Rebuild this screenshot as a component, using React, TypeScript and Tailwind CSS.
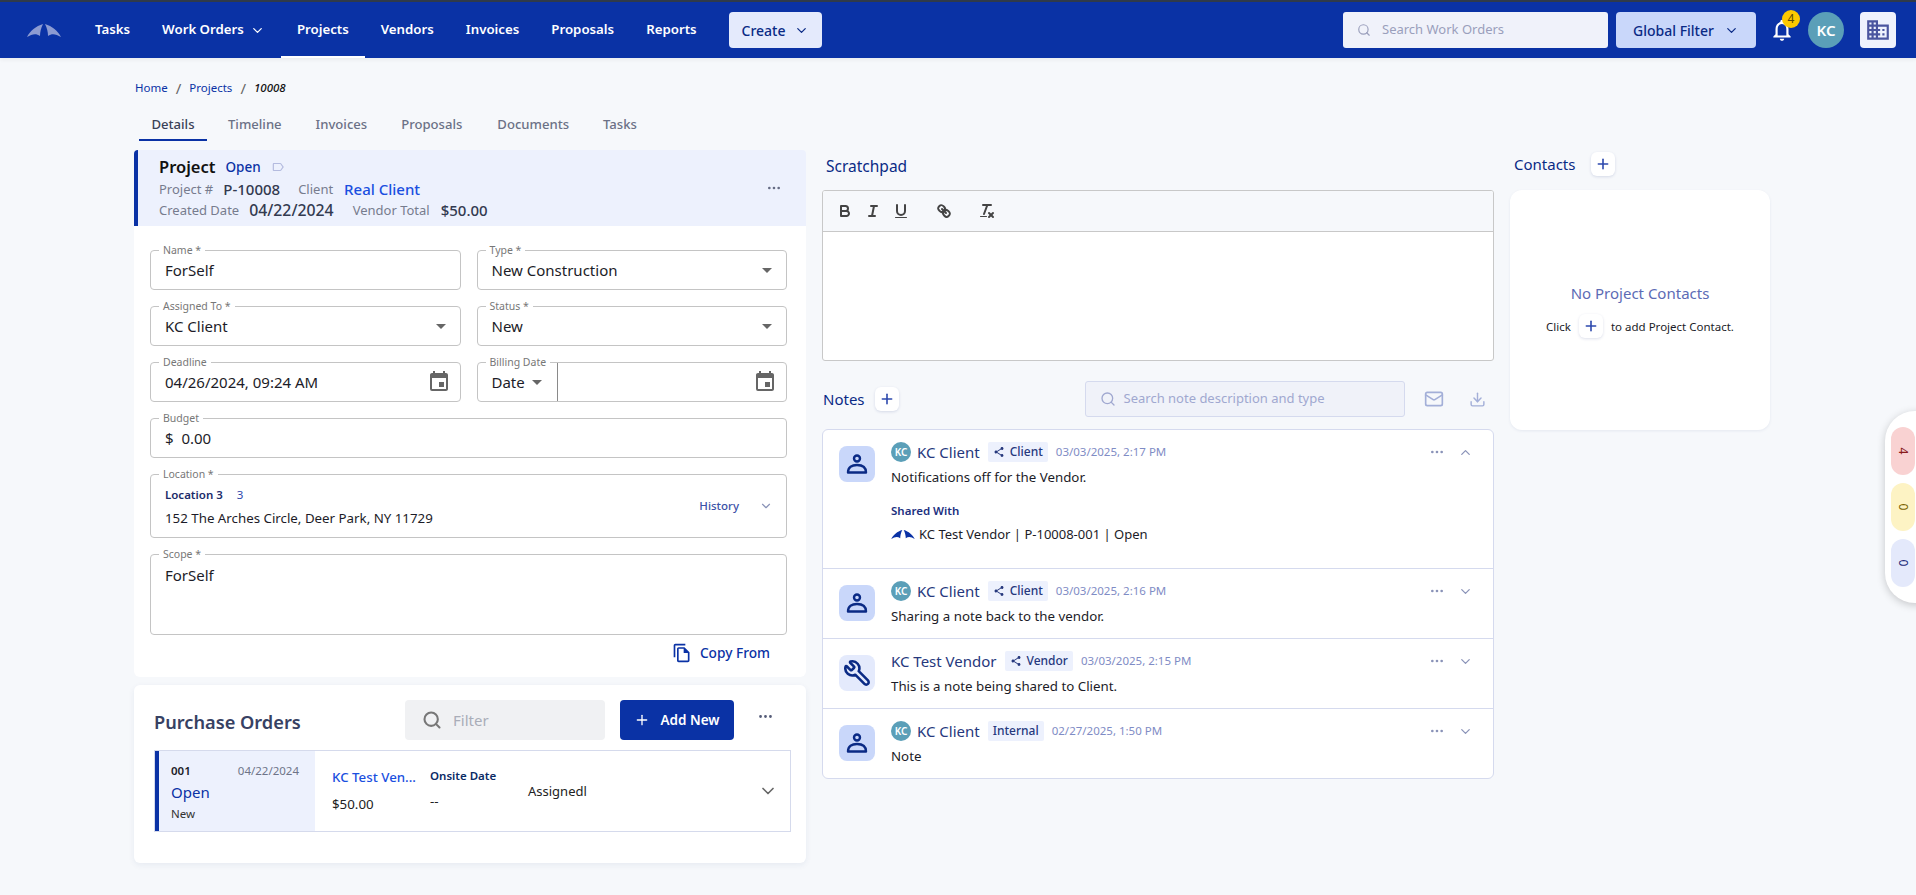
import React from "react";
import { ChevronDown, ChevronUp, Ellipsis, Plus, Search, Wrench, Download, Mail } from "lucide-react";
import { MdOutlineNotifications, MdDomain, MdEvent, MdArrowDropDown, MdShare, MdOutlineFileCopy, MdOutlineLabel } from "react-icons/md";

const font = "font-['Noto_Sans',sans-serif]";

function Logo({ className, fill }: { className?: string; fill: string }) {
  return (
    <svg viewBox="0 0 34 13" className={className} fill={fill}>
      <path d="M0 13 C3 7 9 2 16 0 C14 4 13 8 13 12 C9 9 5 10 0 13 Z" />
      <path d="M18 0 C25 2 31 7 34 13 C29 10 25 9 21 12 C21 8 20 4 18 0 Z" />
    </svg>
  );
}

function NavItem({ label, active, chevron }: { label: string; active?: boolean; chevron?: boolean }) {
  return (
    <div className={`h-full flex items-center px-4 pt-[2px] text-[13.25px] font-semibold text-white gap-[6px] border-b-2 ${active ? "border-white" : "border-transparent"}`}>
      {label}
      {chevron && <ChevronDown size={15} />}
    </div>
  );
}

function Field({ label, className, children }: { label: string; className?: string; children: React.ReactNode }) {
  return (
    <div className={`relative border border-[#c4c4c4] rounded-[4px] flex items-center px-[14px] text-[15px] text-[#1c1c28] ${className ?? "h-[40px]"}`}>
      <span className="absolute -top-[8px] left-[8px] bg-white px-[4px] text-[10.5px] leading-[14px] text-[#777]">{label}</span>
      {children}
    </div>
  );
}

function Person() {
  return (
    <svg viewBox="0 0 24 24" className="w-[24px] h-[24px]" fill="none" stroke="#0a2a85" strokeWidth="2.4" strokeLinejoin="round">
      <circle cx="12" cy="6.5" r="3" />
      <path d="M3 20.5 C3 15 7 13 12 13 C17 13 21 15 21 20.5 Z" />
    </svg>
  );
}

function QuillIcon({ children }: { children: React.ReactNode }) {
  return (
    <svg viewBox="0 0 18 18" className="w-[18px] h-[18px]" fill="none" stroke="#444" strokeWidth="2" strokeLinecap="round" strokeLinejoin="round">
      {children}
    </svg>
  );
}

function Note({ name, tag, share, date, vendor, text, open, last }: { name: string; tag: string; share?: boolean; date: string; vendor?: boolean; text: string; open?: boolean; last?: boolean }) {
  return (
    <div className={`flex pl-[16px] pr-[20px] ${open ? "h-[139px] pt-[12px]" : last ? "h-[69px] pt-[12px]" : "h-[70px] pt-[12px]"} ${last ? "" : "border-b border-[#d5daee]"}`}>
      <div className={`w-[36px] h-[36px] mt-[4px] rounded-[8px] flex items-center justify-center shrink-0 ${vendor ? "bg-[#e4eafc]" : "bg-[#c9d7fa]"}`}>
        {vendor ? <Wrench size={28} color="#0a2a85" strokeWidth={2.2} style={{ transform: "scaleX(-1)" }} /> : <Person />}
      </div>
      <div className="ml-[16px] flex-1 min-w-0">
        <div className="flex items-center h-[20px]">
          {!vendor && <div className="w-[20px] h-[20px] rounded-full bg-[#5b9fb8] text-white text-[10px] font-semibold flex items-center justify-center mr-[6px]">KC</div>}
          <span className="text-[15px] text-[#26387d]">{name}</span>
          <span className="ml-[8px] h-[20px] px-[5px] bg-[#edf1fd] rounded-[2px] flex items-center gap-[5px] text-[12px] font-medium text-[#26387d]">
            {share && <MdShare size={12} />}
            {tag}
          </span>
          <span className="ml-[8px] text-[11.5px] text-[#7f8cc5]">{date}</span>
          <Ellipsis size={16} color="#8a93b8" className="ml-auto" />
          <span className="ml-[13px]">{open ? <ChevronUp size={15} color="#8a93b8" /> : <ChevronDown size={15} color="#8a93b8" />}</span>
        </div>
        <div className="mt-[6px] text-[13.3px] leading-[18px] text-[#1c1c28]">{text}</div>
        {open && (
          <>
            <div className="mt-[17px] text-[11.5px] font-semibold leading-[16px] text-[#1c3080]">Shared With</div>
            <div className="mt-[6px] flex items-center gap-[4px] text-[13px] leading-[18px] text-[#1c1c28]">
              <Logo className="w-[24px] h-[9px]" fill="#0a32a5" />
              KC Test Vendor | P-10008-001 | Open
            </div>
          </>
        )}
      </div>
    </div>
  );
}

function PlusBtn() {
  return (
    <div className="w-[24px] h-[24px] bg-white rounded-[6px] shadow-[0_1px_3px_rgba(30,50,120,0.15)] flex items-center justify-center">
      <Plus size={16} color="#2c48ad" strokeWidth={2.4} />
    </div>
  );
}

function Pill({ bg, color, v }: { bg: string; color: string; v: string }) {
  return (
    <div className={`w-[24px] h-[48px] rounded-full ${bg} ${color} flex items-center justify-center text-[12px]`}>
      <span className="rotate-90">{v}</span>
    </div>
  );
}

export default function App() {
  return (
    <div className={`${font} relative w-[1916px] h-[895px] overflow-hidden bg-[#f6f8fb]`}>
      <header className="h-[58px] bg-[#0a32a5] border-t-2 border-[#2f3a4a] flex items-stretch pl-[27px] pr-[20px] shadow-[0_2px_4px_rgba(0,0,0,0.05)]">
        <div className="flex items-center mr-[18px]"><Logo className="w-[34px] h-[13px]" fill="#8c9bd2" /></div>
        <nav className="flex items-stretch">
          <NavItem label="Tasks" />
          <NavItem label="Work Orders" chevron />
          <NavItem label="Projects" active />
          <NavItem label="Vendors" />
          <NavItem label="Invoices" />
          <NavItem label="Proposals" />
          <NavItem label="Reports" />
        </nav>
        <div className="flex items-center ml-[16px]">
          <div className="w-[93px] h-[36px] bg-[#e4eafc] rounded-[4px] flex items-center justify-center gap-[8px] text-[14px] font-medium text-[#0a2a85]">
            Create <ChevronDown size={15} />
          </div>
        </div>
        <div className="ml-auto flex items-center">
          <div className="w-[265px] h-[36px] bg-[#f0f2fa] rounded-[3px] flex items-center pl-[14px] gap-[11px] text-[13px] text-[#9a9fbc]">
            <Search size={14} color="#9a9fbc" /> Search Work Orders
          </div>
          <div className="ml-[8px] w-[140px] h-[36px] bg-[#c9d7fa] rounded-[4px] flex items-center justify-center gap-[10px] text-[14px] font-medium text-[#0a2a85]">
            Global Filter <ChevronDown size={15} />
          </div>
          <div className="relative ml-[13px] w-[26px] h-[26px] flex items-center justify-center">
            <MdOutlineNotifications size={26} color="#fff" />
            <span className="absolute -top-[7px] left-[13px] w-[18px] h-[18px] rounded-full bg-[#fbc900] text-[#5a4a00] text-[12px] flex items-center justify-center">4</span>
          </div>
          <div className="ml-[13px] w-[36px] h-[36px] rounded-full bg-[#5b9fb8] text-white text-[15px] font-semibold flex items-center justify-center">KC</div>
          <div className="ml-[16px] w-[36px] h-[36px] rounded-[4px] bg-[#eef2fd] flex items-center justify-center">
            <MdDomain size={26} color="#4a559f" />
          </div>
        </div>
      </header>

      <div className="pl-[135px] pt-[22px] flex items-center gap-[8px] h-[38px] text-[11.5px] leading-[16px] text-[#0a32a5]">
        <span>Home</span><span className="text-[#666] text-[15px]">/</span><span>Projects</span><span className="text-[#666] text-[15px]">/</span><span className="italic font-medium text-[#111]">10008</span>
      </div>

      <div className="ml-[139px] mt-[12px] h-[42px] flex items-start text-[13.1px] font-medium text-[#6b7186]">
        <div className="w-[68px] h-[33px] pt-[7px] text-center text-[#3a4157] border-b-2 border-[#0a32a5]">Details</div>
        <div className="ml-[21px] pt-[7px]">Timeline</div>
        <div className="ml-[34px] pt-[7px]">Invoices</div>
        <div className="ml-[34px] pt-[7px]">Proposals</div>
        <div className="ml-[35px] pt-[7px]">Documents</div>
        <div className="ml-[34px] pt-[7px]">Tasks</div>
      </div>

      <div className="flex items-start pl-[134px]">
        <div className="w-[672px] shrink-0">
          <div className="h-[76px] bg-[#edf1fd] border-l-4 border-[#0a32a5] rounded-tl-[4px] rounded-tr-[4px] pl-[21px] pr-[24px] pt-[5px] relative">
            <div className="flex items-center h-[24px]">
              <span className="text-[16.5px] font-semibold text-[#111]">Project</span>
              <span className="ml-[10px] text-[13.5px] font-medium text-[#0a32a5]">Open</span>
              <MdOutlineLabel size={14} color="#b4bbdf" className="ml-[10px]" />
            </div>
            <div className="flex items-center h-[21px] text-[13px] text-[#777c8e]">
              Project #<span className="ml-[10px] text-[15px] font-medium text-[#333a50]">P-10008</span>
              <span className="ml-[18px]">Client</span><span className="ml-[11px] text-[15px] font-medium text-[#1a4fe0]">Real Client</span>
            </div>
            <div className="flex items-center h-[21px] text-[13px] text-[#777c8e]">
              Created Date<span className="ml-[10px] text-[15.8px] font-medium text-[#333a50]">04/22/2024</span>
              <span className="ml-[19px]">Vendor Total</span><span className="ml-[11px] text-[15px] font-medium text-[#333a50]">$50.00</span>
            </div>
            <Ellipsis size={16} color="#666c84" className="absolute right-[24px] top-[30px]" />
          </div>

          <div className="bg-white h-[451px] rounded-b-[6px] pl-[16px] pr-[19px] pt-[24px] flex flex-col gap-[16px]">
            <div className="grid grid-cols-2 gap-[16px]">
              <Field label="Name *">ForSelf</Field>
              <Field label="Type *">New Construction<MdArrowDropDown size={24} color="#666" className="ml-auto -mr-[7px]" /></Field>
              <Field label="Assigned To *">KC Client<MdArrowDropDown size={24} color="#666" className="ml-auto -mr-[7px]" /></Field>
              <Field label="Status *">New<MdArrowDropDown size={24} color="#666" className="ml-auto -mr-[7px]" /></Field>
              <Field label="Deadline">04/26/2024, 09:24 AM<MdEvent size={24} color="#666" className="ml-auto -mr-[5px]" /></Field>
              <Field label="Billing Date">
                <div className="w-[66px] h-[38px] shrink-0 flex items-center border-r border-[#8a8a8a]">
                  Date<MdArrowDropDown size={24} color="#666" />
                </div>
                <MdEvent size={24} color="#666" className="ml-auto -mr-[5px]" />
              </Field>
            </div>
            <Field label="Budget">$&nbsp;&nbsp;0.00</Field>
            <Field label="Location *" className="h-[64px]">
              <div className="text-[13.3px]">
                <div className="font-semibold text-[11.5px] text-[#1c2c6a] leading-[20px]">Location 3 <span className="ml-[11px] font-normal text-[#2c48ad]">3</span></div>
                <div className="mt-[3px] leading-[20px]">152 The Arches Circle, Deer Park, NY 11729</div>
              </div>
              <span className="ml-auto text-[11.5px] font-medium text-[#3c52a8]">History</span>
              <ChevronDown size={14} color="#8a93b8" className="ml-[20px] -mr-[1px]" />
            </Field>
            <Field label="Scope *" className="h-[81px] items-start pt-[9px]">ForSelf</Field>
            <div className="flex items-center justify-end gap-[8px] -mt-[8px] pr-[17px] text-[13.7px] font-medium text-[#0a32a5]">
              <MdOutlineFileCopy size={20} /> Copy From
            </div>
          </div>

          <div className="mt-[8px] h-[178px] bg-white rounded-[6px] shadow-[0_2px_6px_rgba(30,50,120,0.07)] pl-[20px] pr-[15px] pt-[15px]">
            <div className="flex items-start h-[40px]">
              <div className="text-[18.2px] leading-[28px] mt-[8px] font-semibold text-[#374163] w-[251px]">Purchase Orders</div>
              <div className="w-[200px] h-[40px] rounded-[4px] bg-[#f0f1f3] flex items-center pl-[17px] gap-[11px] text-[15px] text-[#a9adb8]">
                <Search size={20} color="#777" strokeWidth={2.5} /> Filter
              </div>
              <div className="ml-[15px] w-[114px] h-[40px] rounded-[4px] bg-[#0a32a5] text-white text-[13.5px] font-semibold flex items-center justify-center gap-[10px]">
                <Plus size={16} /> Add New
              </div>
              <Ellipsis size={17} color="#555c78" className="ml-[23px] mt-[8px]" />
            </div>
            <div className="mt-[10px] h-[82px] border border-[#d5daec] flex items-stretch">
              <div className="w-[160px] bg-[#edf1fd] border-l-4 border-[#0a32a5] pl-[12px] pr-[16px] pt-[11px]">
                <div className="flex justify-between items-center h-[18px] text-[11.5px]">
                  <span className="font-semibold text-[#1c1c28]">001</span><span className="text-[#6e7488]">04/22/2024</span>
                </div>
                <div className="text-[15px] leading-[22px] mt-[1px] text-[#0a32a5]">Open</div>
                <div className="text-[11.5px] leading-[16px] mt-[3px] text-[#333]">New</div>
              </div>
              <div className="w-[98px] ml-[17px] pt-[17px]">
                <div className="text-[13.3px] font-medium text-[#1a4fe0] truncate">KC Test Ven...</div>
                <div className="text-[13.3px] mt-[7px] text-[#222]">$50.00</div>
              </div>
              <div className="w-[98px] pt-[16px]">
                <div className="text-[11.5px] font-semibold text-[#0a2a65]">Onsite Date</div>
                <div className="text-[13.3px] mt-[8px] text-[#222]">--</div>
              </div>
              <div className="self-center text-[13px] text-[#222] mt-[1px]">Assignedl</div>
              <ChevronDown size={20} color="#666" className="ml-auto mr-[12px] self-center" />
            </div>
          </div>
        </div>

        <div className="w-[672px] ml-[16px] shrink-0">
          <div className="h-[40px] pl-[4px] pb-[6px] flex items-center text-[15.5px] text-[#0a2a85]">Scratchpad</div>
          <div className="border border-[#c8c8c8] rounded-[3px] h-[171px] bg-white overflow-hidden">
            <div className="h-[41px] bg-[#f6f8fb] border-b border-[#c8c8c8] flex items-center pl-[13px]">
              <QuillIcon><path d="M5,4H9.5A2.5,2.5,0,0,1,12,6.5v0A2.5,2.5,0,0,1,9.5,9H5V4Z" /><path d="M5,9h5.5A2.5,2.5,0,0,1,13,11.5v0A2.5,2.5,0,0,1,10.5,14H5V9Z" /></QuillIcon>
              <span className="ml-[10px]" />
              <QuillIcon><line x1="7" x2="13" y1="4" y2="4" /><line x1="5" x2="11" y1="14" y2="14" /><line x1="8" x2="10" y1="14" y2="4" /></QuillIcon>
              <span className="ml-[10px]" />
              <QuillIcon><path d="M5,3V9a4,4,0,0,0,4,4H9a4,4,0,0,0,4-4V3" /><line x1="3.5" x2="14.5" y1="15.5" y2="15.5" strokeWidth="1" /></QuillIcon>
              <span className="ml-[25px]" />
              <QuillIcon><line x1="7" x2="11" y1="7" y2="11" /><path d="M8.9,4.577a3.476,3.476,0,0,1,.36,4.679A3.476,3.476,0,0,1,4.577,8.9C3.185,7.5,2.035,6.4,4.217,4.217S7.5,3.185,8.9,4.577Z" /><path d="M13.423,9.1a3.476,3.476,0,0,0-4.679-.36,3.476,3.476,0,0,0,.36,4.679c1.392,1.392,2.5,2.542,4.679.36S14.815,10.5,13.423,9.1Z" /></QuillIcon>
              <span className="ml-[25px]" />
              <QuillIcon><line x1="5" x2="13" y1="3" y2="3" /><line x1="6" x2="9.35" y1="12" y2="3" /><line x1="11" x2="15" y1="11" y2="15" /><line x1="15" x2="11" y1="11" y2="15" /><line x1="2.5" x2="8.5" y1="14.5" y2="14.5" strokeWidth="1" /></QuillIcon>
            </div>
          </div>

          <div className="mt-[20px] h-[36px] flex items-center">
            <span className="text-[15px] text-[#0a2a85] ml-[1px]">Notes</span>
            <span className="ml-[10px]"><PlusBtn /></span>
            <div className="ml-[186px] w-[320px] h-[36px] bg-[#f0f2f9] border border-[#d5daee] rounded-[3px] flex items-center pl-[14px] gap-[8px] text-[13px] text-[#a0a8d0]">
              <Search size={16} color="#a0a8d0" /> Search note description and type
            </div>
            <Mail size={20} color="#a3afd8" className="ml-[19px]" />
            <Download size={17} color="#a3afd8" className="ml-[25px]" />
          </div>

          <div className="mt-[12px] bg-white border border-[#d5daee] rounded-[6px]">
            <Note name="KC Client" tag="Client" share date="03/03/2025, 2:17 PM" text="Notifications off for the Vendor." open />
            <Note name="KC Client" tag="Client" share date="03/03/2025, 2:16 PM" text="Sharing a note back to the vendor." />
            <Note name="KC Test Vendor" tag="Vendor" share vendor date="03/03/2025, 2:15 PM" text="This is a note being shared to Client." />
            <Note name="KC Client" tag="Internal" date="02/27/2025, 1:50 PM" text="Note" last />
          </div>
        </div>

        <div className="w-[260px] ml-[16px] shrink-0">
          <div className="h-[40px] flex items-center pl-[4px] pb-[12px]">
            <span className="text-[15px] text-[#0a2a85]">Contacts</span>
            <span className="ml-[16px]"><PlusBtn /></span>
          </div>
          <div className="h-[240px] bg-white rounded-[12px] shadow-[0_1px_3px_rgba(30,50,120,0.08)] flex flex-col items-center justify-center">
            <div className="text-[15px] text-[#5c6bb5]">No Project Contacts</div>
            <div className="mt-[10px] flex items-center text-[11.5px] text-[#1c1c28]">
              Click <span className="mx-[8px]"><PlusBtn /></span> to add Project Contact.
            </div>
          </div>
        </div>
      </div>

      <div className="absolute left-[1885px] top-[411px] w-[40px] h-[192px] bg-white rounded-l-[30px] shadow-[0_2px_8px_rgba(0,0,0,0.2)] pl-[6px] pt-[16px] flex flex-col gap-[8px]">
        <Pill bg="bg-[#f9d2d2]" color="text-[#8a1c1c]" v="4" />
        <Pill bg="bg-[#fdf3c4]" color="text-[#7a6400]" v="0" />
        <Pill bg="bg-[#e4e9fb]" color="text-[#1c2c7a]" v="0" />
      </div>
    </div>
  );
}
